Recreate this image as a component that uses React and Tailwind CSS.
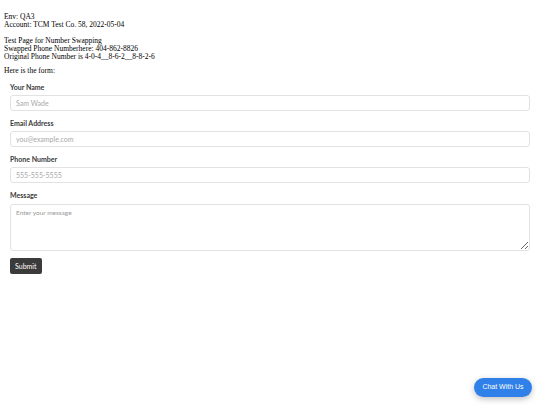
import React from 'react'

const fields = [
  { label: 'Your Name', placeholder: 'Sam Wade' },
  { label: 'Email Address', placeholder: 'you@example.com' },
  { label: 'Phone Number', placeholder: '555-555-5555' },
]

export default function App() {
  return (
    <div className="relative h-[405px] w-[540px] overflow-hidden bg-white">
      {/* Page text */}
      <div className="px-[4px] pt-[13px] font-['Liberation_Serif',serif] text-[7.5px] leading-[8px] text-black">
        <p>Env: QA3</p>
        <p>Account: TCM Test Co. 58, 2022-05-04</p>
        <p className="mt-[8px]">Test Page for Number Swapping</p>
        <p>Swapped Phone Numberhere: 404-862-8826</p>
        <p>Original Phone Number is 4-0-4__8-6-2__8-8-2-6</p>
        <p className="mt-[6px]">Here is the form:</p>
      </div>

      {/* Form */}
      <form className="px-[10px] pt-[8px] font-['Lato',sans-serif]">
        {fields.map(({ label, placeholder }) => (
          <div key={label} className="mb-[8px]">
            <label className="block text-[7px] font-bold leading-[8px] text-[#3a3a3a]">{label}</label>
            <input
              placeholder={placeholder}
              className="mt-[4px] block h-[16px] w-[520px] rounded-[3px] border border-[#e2e2e2] px-[5px] text-[7px] placeholder:text-[#a8a8a8] outline-none"
            />
          </div>
        ))}
        <div>
          <label className="block text-[7px] font-bold leading-[8px] text-[#3a3a3a]">Message</label>
          <textarea
            placeholder="Enter your message"
            className="mt-[5px] block h-[47px] w-[520px] rounded-[3px] border border-[#e2e2e2] px-[5px] py-[3px] text-[6.5px] placeholder:text-[#999] outline-none"
          />
        </div>
        <button
          type="button"
          className="mt-[6px] h-[16px] rounded-[2px] bg-[#3b3b3b] px-[5px] text-[7px] text-white"
        >
          Submit
        </button>
      </form>

      {/* Chat bubble */}
      <button
        type="button"
        className="absolute left-[474px] top-[378px] h-[19px] w-[58px] rounded-full bg-[#2f80e8] font-['Liberation_Sans',sans-serif] text-[7px] text-white shadow-[0_2px_6px_rgba(0,0,0,0.25)]"
      >
        Chat With Us
      </button>
    </div>
  )
}
